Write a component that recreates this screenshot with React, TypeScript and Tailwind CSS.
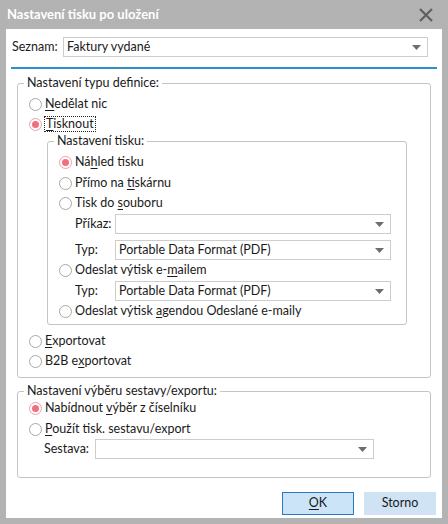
import type { ReactNode } from "react";

const FONT = { fontFamily: '"Segoe UI", Lato, "Noto Sans", sans-serif' };

function Radio({ checked, children, focused }: { checked?: boolean; children: ReactNode; focused?: boolean }) {
  return (
    <div className="flex h-[20px] items-center">
      <span
        className={`flex h-[13px] w-[13px] shrink-0 items-center justify-center rounded-full border bg-white ${
          checked ? "border-[#f0a0ab]" : "border-[#a8a8a8]"
        }`}
      >
        {checked && <span className="h-[7px] w-[7px] rounded-full bg-[#f0707f]" />}
      </span>
      <span
        className={`ml-[2px] leading-[14px] ${
          focused ? "border border-dotted border-[#222] px-[1px]" : "px-[1px]"
        }`}
      >
        {children}
      </span>
    </div>
  );
}

function U({ children }: { children: ReactNode }) {
  return <span className="underline underline-offset-2">{children}</span>;
}

function Select({ value, className }: { value?: string; className?: string }) {
  return (
    <div
      className={`flex h-[20px] items-center justify-between border border-[#cdcdcd] bg-white pl-[3px] pr-[6px] ${className ?? ""}`}
    >
      <span className="truncate">{value}</span>
      <svg width="9" height="5" viewBox="0 0 9 5" className="shrink-0">
        <path d="M0 0h9L4.5 5z" fill="#6e6e6e" />
      </svg>
    </div>
  );
}

function Group({ title, children, className }: { title: string; children: ReactNode; className?: string }) {
  return (
    <fieldset className={`rounded-[3px] border border-[#c4c4c4] ${className ?? ""}`}>
      <legend className="-ml-[5px] px-[3px] leading-[14px]">{title}</legend>
      {children}
    </fieldset>
  );
}

export default function App() {
  return (
    <div className="h-[524px] w-[448px] bg-[#b3b3b3] text-[12.5px] text-[#1a1a1a]" style={FONT}>
      <div className="flex h-[29px] items-center justify-between pl-[7px] pr-[15px]">
        <span className="text-[13px] font-bold text-white">Nastavení tisku po uložení</span>
        <svg width="14" height="14" viewBox="0 0 14 14">
          <path d="M1 1L13 13M13 1L1 13" stroke="#5f5f5f" strokeWidth="2.2" />
        </svg>
      </div>
      <div className="mx-[6px] h-[489px] w-[436px] bg-white px-[5px] pt-[8px]">
        <div className="flex items-center">
          <span className="w-[52px] pl-[1px]">Seznam:</span>
          <Select value="Faktury vydané" className="w-[365px]" />
        </div>
        <div className="mt-[10px] h-[2px] bg-[#2f8fc7]" />

        <div className="px-[6px] pt-[7px]">
          <Group title="Nastavení typu definice:" className="h-[302px] pl-[11px]">
            <div className="pt-[4px]">
              <Radio>
                <U>N</U>edělat nic
              </Radio>
              <Radio checked focused>
                <U>T</U>isknout
              </Radio>
              <Group title="Nastavení tisku:" className="mr-[23px] ml-[18px] h-[191px] pl-[11px]">
                <div className="pt-[4px]">
                  <Radio checked>
                    Ná<U>h</U>led tisku
                  </Radio>
                  <div className="mt-[1px]">
                    <Radio>
                      Přímo na <U>t</U>iskárnu
                    </Radio>
                  </div>
                  <Radio>
                    Tisk do <U>s</U>ouboru
                  </Radio>
                  <div className="mt-[1px] flex items-center">
                    <span className="box-content w-[40px] pl-[16px]">Příkaz:</span>
                    <Select className="w-[276px]" />
                  </div>
                  <div className="mt-[6px] flex items-center">
                    <span className="box-content w-[40px] pl-[16px]">Typ:</span>
                    <Select value="Portable Data Format (PDF)" className="w-[276px]" />
                  </div>
                  <Radio>
                    Odeslat výtisk e-<U>m</U>ailem
                  </Radio>
                  <div className="mt-[1px] flex items-center">
                    <span className="box-content w-[40px] pl-[16px]">Typ:</span>
                    <Select value="Portable Data Format (PDF)" className="w-[276px]" />
                  </div>
                  <Radio>
                    Odeslat výtisk <U>a</U>gendou Odeslané e-maily
                  </Radio>
                </div>
              </Group>
              <div className="mt-[6px]">
                <Radio>
                  <U>E</U>xportovat
                </Radio>
                <Radio>
                  B2B e<U>x</U>portovat
                </Radio>
              </div>
            </div>
          </Group>

          <Group title="Nastavení výběru sestavy/exportu:" className="mt-[6px] h-[94px] pl-[11px]">
            <div>
              <Radio checked>
                Nabídnout <U>v</U>ýběr z číselníku
              </Radio>
              <div className="mt-[1px]">
                <Radio>
                  <U>P</U>oužít tisk. sestavu/export
                </Radio>
              </div>
              <div className="flex items-center">
                <span className="box-content w-[51px] pl-[15px]">Sestava:</span>
                <Select className="w-[279px]" />
              </div>
            </div>
          </Group>
        </div>

        <div className="mt-[14px] flex justify-end gap-[10px] pr-[1px]">
          <button className="h-[23px] w-[72px] border border-[#2a78c3] bg-[#cce4f7]">
            <U>O</U>K
          </button>
          <button className="h-[23px] w-[72px] bg-[#cfe3f5]">Storno</button>
        </div>
      </div>
    </div>
  );
}
